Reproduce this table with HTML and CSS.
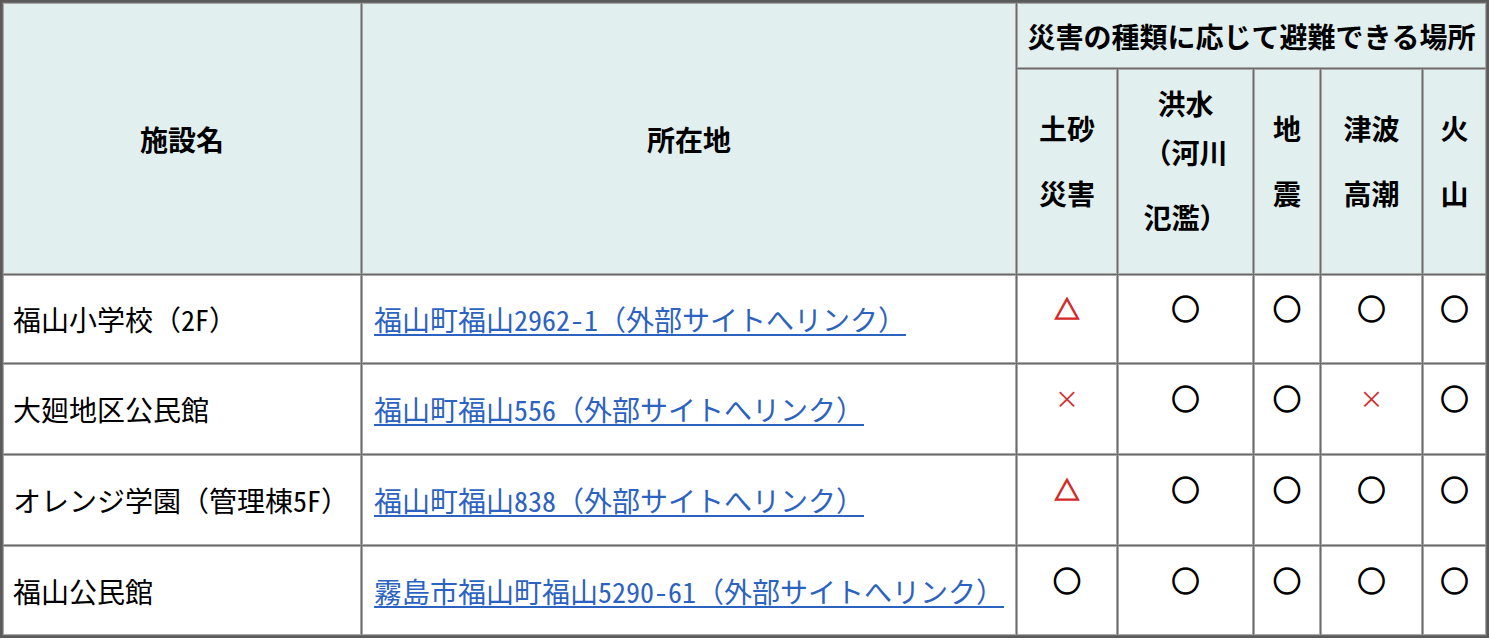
FILE: index.html
```html
<!DOCTYPE html>
<html lang="ja">
<head>
<meta charset="utf-8">
<title>避難所一覧</title>
<link rel="stylesheet" href="styles.css">
</head>
<body>
<table class="shelters">
  <colgroup>
    <col class="c-name">
    <col class="c-addr">
    <col class="c-dosha">
    <col class="c-kozui">
    <col class="c-jishin">
    <col class="c-tsunami">
    <col class="c-kazan">
  </colgroup>
  <thead>
    <tr class="h1">
      <th rowspan="2">施設名</th>
      <th rowspan="2">所在地</th>
      <th colspan="5">災害の種類に応じて避難できる場所</th>
    </tr>
    <tr class="h2">
      <th class="kind"><span class="ln">土砂</span><span class="ln gap">災害</span></th>
      <th class="kind"><span class="ln">洪水</span><span class="ln">（河川</span><span class="ln gap">氾濫）</span></th>
      <th class="kind"><span class="ln">地</span><span class="ln gap">震</span></th>
      <th class="kind"><span class="ln">津波</span><span class="ln gap">高潮</span></th>
      <th class="kind"><span class="ln">火</span><span class="ln gap">山</span></th>
    </tr>
  </thead>
  <tbody>
    <tr class="r1">
      <td class="txt name">福山小学校（2F）</td>
      <td class="txt"><a href="#">福山町福山2962-1（外部サイトへリンク）</a></td>
      <td class="mk red tri">△</td>
      <td class="mk">○</td>
      <td class="mk">○</td>
      <td class="mk">○</td>
      <td class="mk">○</td>
    </tr>
    <tr class="r2">
      <td class="txt name">大廻地区公民館</td>
      <td class="txt"><a href="#">福山町福山556（外部サイトへリンク）</a></td>
      <td class="mk red x">×</td>
      <td class="mk">○</td>
      <td class="mk">○</td>
      <td class="mk red x">×</td>
      <td class="mk">○</td>
    </tr>
    <tr class="r3">
      <td class="txt name">オレンジ学園（管理棟5F）</td>
      <td class="txt"><a href="#">福山町福山838（外部サイトへリンク）</a></td>
      <td class="mk red tri">△</td>
      <td class="mk">○</td>
      <td class="mk">○</td>
      <td class="mk">○</td>
      <td class="mk">○</td>
    </tr>
    <tr class="r4">
      <td class="txt name">福山公民館</td>
      <td class="txt"><a href="#">霧島市福山町福山5290-61（外部サイトへリンク）</a></td>
      <td class="mk">○</td>
      <td class="mk">○</td>
      <td class="mk">○</td>
      <td class="mk">○</td>
      <td class="mk">○</td>
    </tr>
  </tbody>
</table>
</body>
</html>
```

FILE: styles.css
```css
html, body {
  margin: 0;
  padding: 0;
  background: #ffffff;
}

body {
  font-family: "Noto Sans Mono CJK JP", "Noto Sans CJK JP", "Liberation Sans", sans-serif;
  font-size: 28px;
  color: #000000;
}

.shelters {
  table-layout: fixed;
  width: 1489px;
  border: 2px solid #5a5a5a;
  border-spacing: 1px;
  background: #6c6c6c;
}

.c-name { width: 358px; }
.c-addr { width: 654px; }
.c-dosha { width: 100px; }
.c-kozui { width: 135px; }
.c-jishin { width: 66px; }
.c-tsunami { width: 101px; }
.c-kazan { width: 63px; }

.shelters th,
.shelters td {
  box-sizing: border-box;
  border: 1px solid #a8a8a8;
  padding: 0;
  line-height: 40px;
}

.shelters th {
  background: #e2efef;
  font-weight: bold;
  text-align: center;
  vertical-align: middle;
  color: #000000;
}

.h1 { height: 65px; }
.h2 { height: 205px; }

.kind {
  padding-bottom: 22px !important;
}

.ln {
  display: block;
  line-height: 49px;
  white-space: nowrap;
}

.ln.gap {
  margin-top: 16px;
}

.shelters td {
  background: #ffffff;
}

.r1 td { height: 88px; }
.r2 td { height: 90px; }
.r3 td { height: 90px; }
.r4 td { height: 89px; }

.txt {
  padding: 0 10px 0 11px !important;
  vertical-align: middle;
  white-space: nowrap;
}

.txt.name {
  padding-left: 9px !important;
}

.txt a {
  color: #2d63c0;
  text-decoration: underline;
  text-underline-offset: 3px;
}

.mk {
  text-align: center;
  vertical-align: middle;
  padding-bottom: 22px !important;
  color: #000000;
  font-weight: normal;
  -webkit-text-stroke: 1.3px #000000;
}

.red {
  color: #d42b2b;
}

.tri {
  font-size: 25px;
  -webkit-text-stroke: 1.3px #d42b2b;
}

.x {
  font-size: 24px;
  -webkit-text-stroke: 0;
}
```
